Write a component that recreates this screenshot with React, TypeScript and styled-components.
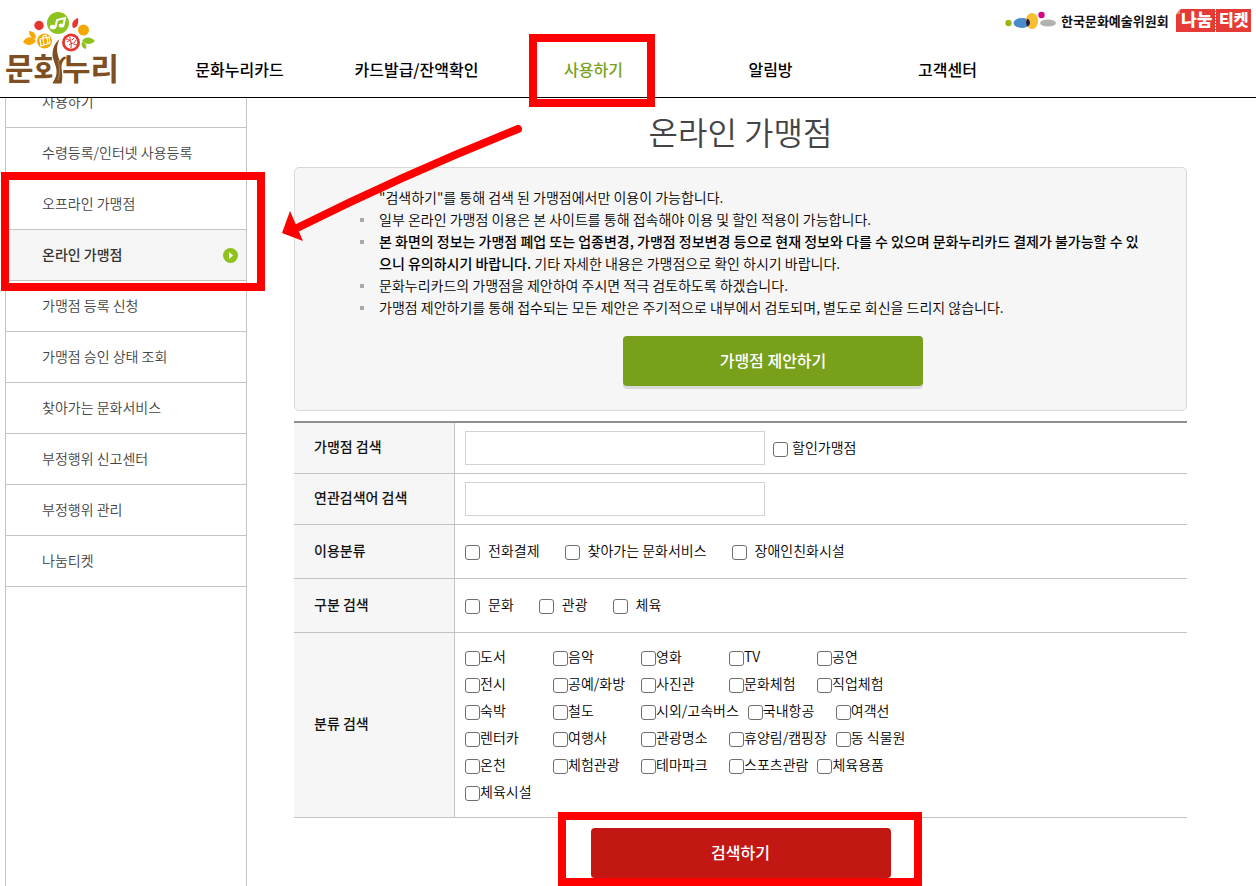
import React from 'react';
import styled, { createGlobalStyle, css } from 'styled-components';

const GlobalStyle = createGlobalStyle`
  * { box-sizing: border-box; }
  body {
    margin: 0;
    background: #fff;
    color: #000;
    font-family: 'Noto Sans CJK KR', 'Noto Sans', sans-serif;
    font-size: 14px;
    font-weight: 350;
    line-height: 22px;
  }
  a { color: inherit; text-decoration: none; }
  button, input { font: inherit; }
`;

const Page = styled.div`
  position: relative;
  display: flex;
  flex-direction: column;
  min-height: 100vh;
`;

const Header = styled.header`
  display: flex;
  justify-content: space-between;
  height: 98px;
  border-bottom: 1px solid #000;
  background: #fff;
`;

const LogoLink = styled.a`
  flex: 0 0 151px;
  svg { display: block; }
`;

const MainMenu = styled.ul`
  flex: 1;
  display: flex;
  align-items: flex-end;
  margin: 0;
  padding: 0;
  list-style: none;
`;

const MenuItem = styled.li<{ $active?: boolean }>`
  position: relative;
  flex: 0 1 177px;
  padding-bottom: 16px;
  text-align: center;
  font-size: 16px;
  font-weight: 500;
  line-height: 24px;
  white-space: nowrap;
  color: ${p => (p.$active ? '#7aa01c' : '#000')};
`;

const Partners = styled.div`
  display: flex;
  align-items: flex-start;
  gap: 8px;
  padding: 9px 5px 0 0;
  margin-left: -60px;
  svg { display: block; }
`;

const Body = styled.div`
  flex: 1;
  display: flex;
`;

const Sidebar = styled.nav`
  position: relative;
  flex: 0 0 242px;
  margin-left: 5px;
  border: solid #c4c4c4;
  border-width: 0 1px;
`;

const SideList = styled.ul`
  margin: 0;
  padding: 0;
  list-style: none;
`;

const SideItem = styled.li<{ $active?: boolean; $clipped?: boolean }>`
  display: flex;
  align-items: flex-end;
  height: ${p => (p.$clipped ? 30 : 51)}px;
  overflow: hidden;
  border-bottom: 1px solid #c4c4c4;
  color: #444;
  ${p => p.$active && css`
    background: #f5f5f5;
    color: #333;
    font-weight: 500;
  `}
`;

const SideLink = styled.a`
  flex: 1;
  display: flex;
  align-items: center;
  justify-content: space-between;
  height: 50px;
  padding: 0 8px 0 36px;
  span { padding-bottom: 3px; }
`;

const Main = styled.main`
  flex: 1;
  min-width: 0;
  padding: 0 69px 0 47px;
`;

const Title = styled.h1`
  margin: 0;
  padding: 9px 0 12px;
  font-size: 32px;
  font-weight: 350;
  line-height: 48px;
  text-align: center;
  color: #444;
`;

const Notice = styled.section`
  padding: 18px 19px 24px 84px;
  border: 1px solid #d9d9d9;
  border-radius: 5px;
  background: #f6f6f6;
`;

const NoticeList = styled.ul`
  margin: 0 18px 18px 0;
  padding: 0;
  list-style: none;
`;

const NoticeItem = styled.li`
  display: flex;
  margin-left: -19px;
  word-break: break-all;
  &::before {
    content: '';
    flex: 0 0 4px;
    height: 4px;
    margin: 10px 15px 0 0;
    background: #aaa;
  }
  b { font-weight: 500; }
`;

const ActionRow = styled.div`
  position: relative;
  display: flex;
  justify-content: center;
`;

const ActionButton = styled.button<{ $tone: 'green' | 'red' }>`
  width: 300px;
  height: 50px;
  padding: 0 0 3px;
  border: 0;
  border-radius: 4px;
  background: ${p => (p.$tone === 'green' ? '#78a01a' : '#c21713')};
  box-shadow: 0 3px 0 #dadada;
  color: #fff;
  font-size: 16px;
  font-weight: 500;
`;

const SearchTable = styled.table`
  width: 100%;
  margin: 10px 0;
  border-spacing: 0;
  border-top: 2px solid #8f8f8f;
  table-layout: fixed;
`;

const RowHead = styled.th`
  width: 161px;
  padding: 0 20px 4px;
  border-right: 1px solid #c4c4c4;
  border-bottom: 1px solid #c4c4c4;
  background: #f6f6f6;
  text-align: left;
  font-weight: 500;
  color: #111;
`;

const RowBody = styled.td<{ $h: number }>`
  height: ${p => p.$h}px;
  padding: 0 10px;
  border-bottom: 1px solid #c4c4c4;
`;

const Line = styled.div<{ $gap: number }>`
  display: flex;
  align-items: center;
  gap: ${p => p.$gap}px;
`;

const TextBox = styled.input`
  width: 300px;
  height: 34px;
  padding: 0 8px;
  border: 1px solid #d3d3d3;
  background: #fff;
`;

const Check = styled.label<{ $gap: number; $min?: number }>`
  display: flex;
  align-items: center;
  gap: ${p => p.$gap}px;
  min-width: ${p => p.$min ?? 0}px;
  height: 27px;
  white-space: nowrap;
  span { padding-bottom: 3px; }
`;

const Tick = styled.input`
  appearance: none;
  width: 15px;
  height: 15px;
  margin: 2px 0 0;
  border: 1px solid #6f6f6f;
  border-radius: 3px;
  background: #fff;
  &:checked { background: #78a01a; }
`;

const Highlight = styled.span<{ $inset: string }>`
  position: absolute;
  inset: ${p => p.$inset};
  z-index: 2;
  border: 8px solid #f00;
  pointer-events: none;
`;

const SideHighlight = styled(Highlight)`
  height: 119px;
`;

const Arrow = styled.svg`
  position: absolute;
  left: 280px;
  top: 120px;
  z-index: 2;
  pointer-events: none;
`;

const fontStack = "'Noto Sans CJK KR', sans-serif";

const BrandLogo = () => (
  <svg width="124" height="92" viewBox="0 0 124 92" role="img" aria-label="문화누리">
    <text x="5" y="80" fontFamily={fontStack} fontSize="31" fontWeight="700" fill="#7f4f21">문화누리</text>
    <path d="M53 50H63V86H53Z" fill="#fff" />
    <path d="M59.500 39C54 44 51.500 51 53 58C54.500 64 57 67 56.500 73C56 78 54 80 52.500 83.500H61.500C63 78 62 73 61.500 68C61.500 63 63 60 66.500 58L65 56.500C62.500 57 61 58.500 60 61C57 55 55.500 47 59.500 39Z" fill="#7f4f21" />
    <path d="M58 60C60 67 60 74 58 80" fill="none" stroke="#b08a62" strokeWidth="1" />
    <circle cx="39" cy="25.500" r="4.700" fill="#e5352f" />
    <circle cx="83.500" cy="30" r="5.500" fill="#f7a800" />
    <circle cx="58" cy="23" r="11" fill="#8dc21f" />
    <path d="M55.500 27L57 20L65 18L63.500 25" fill="none" stroke="#fff" strokeWidth="2" />
    <ellipse cx="53" cy="27" rx="3.200" ry="2.300" fill="#fff" />
    <ellipse cx="61.500" cy="25.500" rx="2.800" ry="2.100" fill="#fff" />
    <path d="M78 18C79 24 77 28 73 28C71 23 73 20 78 18Z" fill="#e5352f" />
    <path d="M23 42C27 35 33 37 36 41C32 46 27 46 23 42Z" fill="#f7a800" />
    <path d="M29 31C34 31 37 35 35 39C31 38 29 35 29 31Z" fill="#f7a800" />
    <circle cx="44.500" cy="41" r="7.500" fill="#f7a800" />
    <path d="M40 39L49 37L50 43L41 46ZM43 38V36L46 35V37M43 39L44 45M47 38L48 44" fill="none" stroke="#fff" strokeWidth="1.200" />
    <circle cx="71" cy="42.500" r="9" fill="#e5352f" />
    <circle cx="71" cy="42.500" r="6.200" fill="#fff" />
    <path d="M66 39C70 39 72 42 71 48M70 37C70 42 72 44 77 45M67 42L70 40M69 45L72 43M72 40L74 38M74 43L76 40" fill="none" stroke="#e5352f" strokeWidth="1" />
    <path d="M82 41C86 36 91 37 95 41C91 45 86 45 82 41Z" fill="#8dc21f" />
    <path d="M82 42C86 43 87 46 86 49C82 48 81 45 82 42Z" fill="#8dc21f" />
  </svg>
);

const ArtsCouncilLogo = () => (
  <svg width="164" height="24" viewBox="0 0 164 24" role="img" aria-label="한국문화예술위원회">
    <circle cx="4.500" cy="14" r="3.200" fill="#9bb713" />
    <ellipse cx="18" cy="14" rx="8.500" ry="5" fill="#4a8ccb" />
    <ellipse cx="28" cy="12" rx="6" ry="8" fill="#f9bd30" />
    <path d="M23.500 9.500C21.500 12 21.500 15 23.500 17.500C26.500 16 27 12 23.500 9.500Z" fill="#1b1a50" />
    <circle cx="37.500" cy="6" r="3.200" fill="#d8047f" />
    <ellipse cx="44" cy="14" rx="8" ry="3.600" fill="#b4b2b0" />
    <text x="57" y="17" fontFamily={fontStack} fontSize="13" fontWeight="700" fill="#111">한국문화예술위원회</text>
  </svg>
);

const TicketLogo = () => (
  <svg width="75" height="24" viewBox="0 0 75 24" role="img" aria-label="나눔티켓">
    <path d="M5 0H75V23H0V6Z" fill="#e53a35" />
    <path d="M0 5L4 0V5Z" fill="#e88b87" />
    <path d="M39.500 0V23" stroke="#fff" strokeWidth="1" strokeDasharray="2 1" />
    <text x="5" y="17" fontFamily={fontStack} fontSize="17" fontWeight="900" fill="#fff">나눔</text>
    <text x="43" y="17" fontFamily={fontStack} fontSize="16" fontWeight="900" fill="#fff">티켓</text>
  </svg>
);

const menu = ['문화누리카드', '카드발급/잔액확인', '사용하기', '알림방', '고객센터'];

const sideItems = [
  '사용하기', '수령등록/인터넷 사용등록', '오프라인 가맹점', '온라인 가맹점', '가맹점 등록 신청',
  '가맹점 승인 상태 조회', '찾아가는 문화서비스', '부정행위 신고센터', '부정행위 관리', '나눔티켓',
];

const categories = [
  ['도서', '음악', '영화', 'TV', '공연'],
  ['전시', '공예/화방', '사진관', '문화체험', '직업체험'],
  ['숙박', '철도', '시외/고속버스', '국내항공', '여객선'],
  ['렌터카', '여행사', '관광명소', '휴양림/캠핑장', '동 식물원'],
  ['온천', '체험관광', '테마파크', '스포츠관람', '체육용품'],
  ['체육시설'],
];

const CheckOption = ({ text, gap, min }: { text: string; gap: number; min?: number }) => (
  <Check $gap={gap} $min={min}>
    <Tick type="checkbox" />
    <span>{text}</span>
  </Check>
);

export default function App() {
  return (
    <Page>
      <GlobalStyle />
      <Header>
        <LogoLink href="#"><BrandLogo /></LogoLink>
        <MainMenu>
          {menu.map(name => (
            <MenuItem key={name} $active={name === '사용하기'}>
              <a href="#">{name}</a>
              {name === '사용하기' && <Highlight $inset="-23px 27px -10px 24px" />}
            </MenuItem>
          ))}
        </MainMenu>
        <Partners>
          <a href="#"><ArtsCouncilLogo /></a>
          <a href="#"><TicketLogo /></a>
        </Partners>
      </Header>

      <Body>
        <Sidebar aria-label="사용하기">
          <SideList>
            {sideItems.map((name, i) => (
              <SideItem key={name} $clipped={i === 0} $active={name === '온라인 가맹점'}>
                <SideLink href="#">
                  <span>{name}</span>
                  {name === '온라인 가맹점' && (
                    <svg width="15" height="15" viewBox="0 0 15 15" aria-hidden="true">
                      <circle cx="7.500" cy="7.500" r="7.500" fill="#8dc21f" />
                      <path d="M6 4L10 7.500L6 11Z" fill="#fff" />
                    </svg>
                  )}
                </SideLink>
              </SideItem>
            ))}
          </SideList>
          <SideHighlight $inset="74px -19px auto -5px" />
        </Sidebar>

        <Main>
          <Title>온라인 가맹점</Title>
          <Notice>
            <NoticeList>
              <NoticeItem><span>"검색하기"를 통해 검색 된 가맹점에서만 이용이 가능합니다.</span></NoticeItem>
              <NoticeItem><span>일부 온라인 가맹점 이용은 본 사이트를 통해 접속해야 이용 및 할인 적용이 가능합니다.</span></NoticeItem>
              <NoticeItem>
                <span>
                  <b>본 화면의 정보는 가맹점 폐업 또는 업종변경, 가맹점 정보변경 등으로 현재 정보와 다를 수 있으며 문화누리카드 결제가 불가능할 수 있으니 유의하시기 바랍니다.</b>
                  {' '}기타 자세한 내용은 가맹점으로 확인 하시기 바랍니다.
                </span>
              </NoticeItem>
              <NoticeItem><span>문화누리카드의 가맹점을 제안하여 주시면 적극 검토하도록 하겠습니다.</span></NoticeItem>
              <NoticeItem><span>가맹점 제안하기를 통해 접수되는 모든 제안은 주기적으로 내부에서 검토되며, 별도로 회신을 드리지 않습니다.</span></NoticeItem>
            </NoticeList>
            <ActionRow><ActionButton type="button" $tone="green">가맹점 제안하기</ActionButton></ActionRow>
          </Notice>

          <form onSubmit={e => e.preventDefault()}>
            <SearchTable>
              <tbody>
                <tr>
                  <RowHead scope="row"><label htmlFor="shop">가맹점 검색</label></RowHead>
                  <RowBody $h={51}>
                    <Line $gap={8}>
                      <TextBox id="shop" type="text" />
                      <CheckOption text="할인가맹점" gap={4} />
                    </Line>
                  </RowBody>
                </tr>
                <tr>
                  <RowHead scope="row"><label htmlFor="related">연관검색어 검색</label></RowHead>
                  <RowBody $h={51}><Line $gap={8}><TextBox id="related" type="text" /></Line></RowBody>
                </tr>
                <tr>
                  <RowHead scope="row">이용분류</RowHead>
                  <RowBody $h={54}>
                    <Line $gap={25}>
                      {['전화결제', '찾아가는 문화서비스', '장애인친화시설'].map(t => <CheckOption key={t} text={t} gap={8} />)}
                    </Line>
                  </RowBody>
                </tr>
                <tr>
                  <RowHead scope="row">구분 검색</RowHead>
                  <RowBody $h={54}>
                    <Line $gap={25}>
                      {['문화', '관광', '체육'].map(t => <CheckOption key={t} text={t} gap={8} />)}
                    </Line>
                  </RowBody>
                </tr>
                <tr>
                  <RowHead scope="row">분류 검색</RowHead>
                  <RowBody $h={185}>
                    {categories.map(row => (
                      <Line key={row[0]} $gap={9}>
                        {row.map(t => <CheckOption key={t} text={t} gap={0} min={79} />)}
                      </Line>
                    ))}
                  </RowBody>
                </tr>
              </tbody>
            </SearchTable>
            <ActionRow>
              <ActionButton type="submit" $tone="red">검색하기</ActionButton>
              <Highlight $inset="-16px 265px -8px 264px" />
            </ActionRow>
          </form>
        </Main>
      </Body>

      <Arrow width="250" height="125" viewBox="0 0 250 125" aria-hidden="true">
        <path d="M238 9Q125 54 17 108" fill="none" stroke="#f00" strokeWidth="8" strokeLinecap="round" />
        <path d="M2 113L10 91L23 121Z" fill="#f00" />
      </Arrow>
    </Page>
  );
}
